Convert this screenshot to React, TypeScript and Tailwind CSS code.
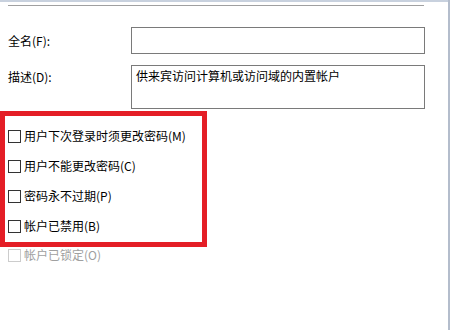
const FONT = "font-['Microsoft_YaHei','Noto_Sans_CJK_SC',sans-serif]";

const OPTIONS = [
    "用户下次登录时须更改密码(M)",
    "用户不能更改密码(C)",
    "密码永不过期(P)",
    "帐户已禁用(B)",
];

function Box({ disabled }: { disabled?: boolean }) {
    return (
        <span
            className={`w-[13px] h-[13px] flex-shrink-0 border bg-white ${
                disabled ? "border-[#cccccc]" : "border-[#333333]"
            }`}
        />
    );
}

export default function App() {
    return (
        <div className={`flex w-[450px] h-[330px] overflow-hidden bg-white text-[12px] text-black ${FONT}`}>
            <div className="flex-1 flex flex-col">
                {/* window top edge */}
                <div className="h-[2px] bg-[#c8d1de]" />
                {/* separator */}
                <div className="mt-[3px] ml-2 w-[416px] h-px bg-[#a0a0a0]" />

                {/* full name */}
                <div className="mt-[21px] flex items-center">
                    <span className="w-[131px] pl-2 leading-4">全名(F):</span>
                    <div className="w-[294px] h-[27px] border border-[#7a7a7a] bg-white" />
                </div>

                {/* description */}
                <div className="mt-[11px] flex items-start">
                    <span className="w-[131px] pl-2 pt-[4px] leading-4">描述(D):</span>
                    <div className="w-[294px] h-[44px] border border-[#7a7a7a] bg-white px-[4px] pt-[2px] leading-4">
                        供来宾访问计算机或访问域的内置帐户
                    </div>
                </div>

                {/* highlighted options */}
                <div className="mt-[2px] w-[207px] border-[5px] border-[#e41e26] pl-[3px] pt-[5px] pb-[1px] flex flex-col">
                    {OPTIONS.map((label) => (
                        <div key={label} className="h-[30px] flex items-center gap-[3px]">
                            <Box />
                            <span className="leading-4 whitespace-nowrap">{label}</span>
                        </div>
                    ))}
                </div>

                <div className="h-[16px] pl-2 flex items-center gap-[3px] text-[#a0a0a0]">
                    <Box disabled />
                    <span className="leading-4">帐户已锁定(O)</span>
                </div>
            </div>
            {/* window right edge */}
            <div className="w-[2px] bg-[#b4bdcc]" />
        </div>
    );
}
